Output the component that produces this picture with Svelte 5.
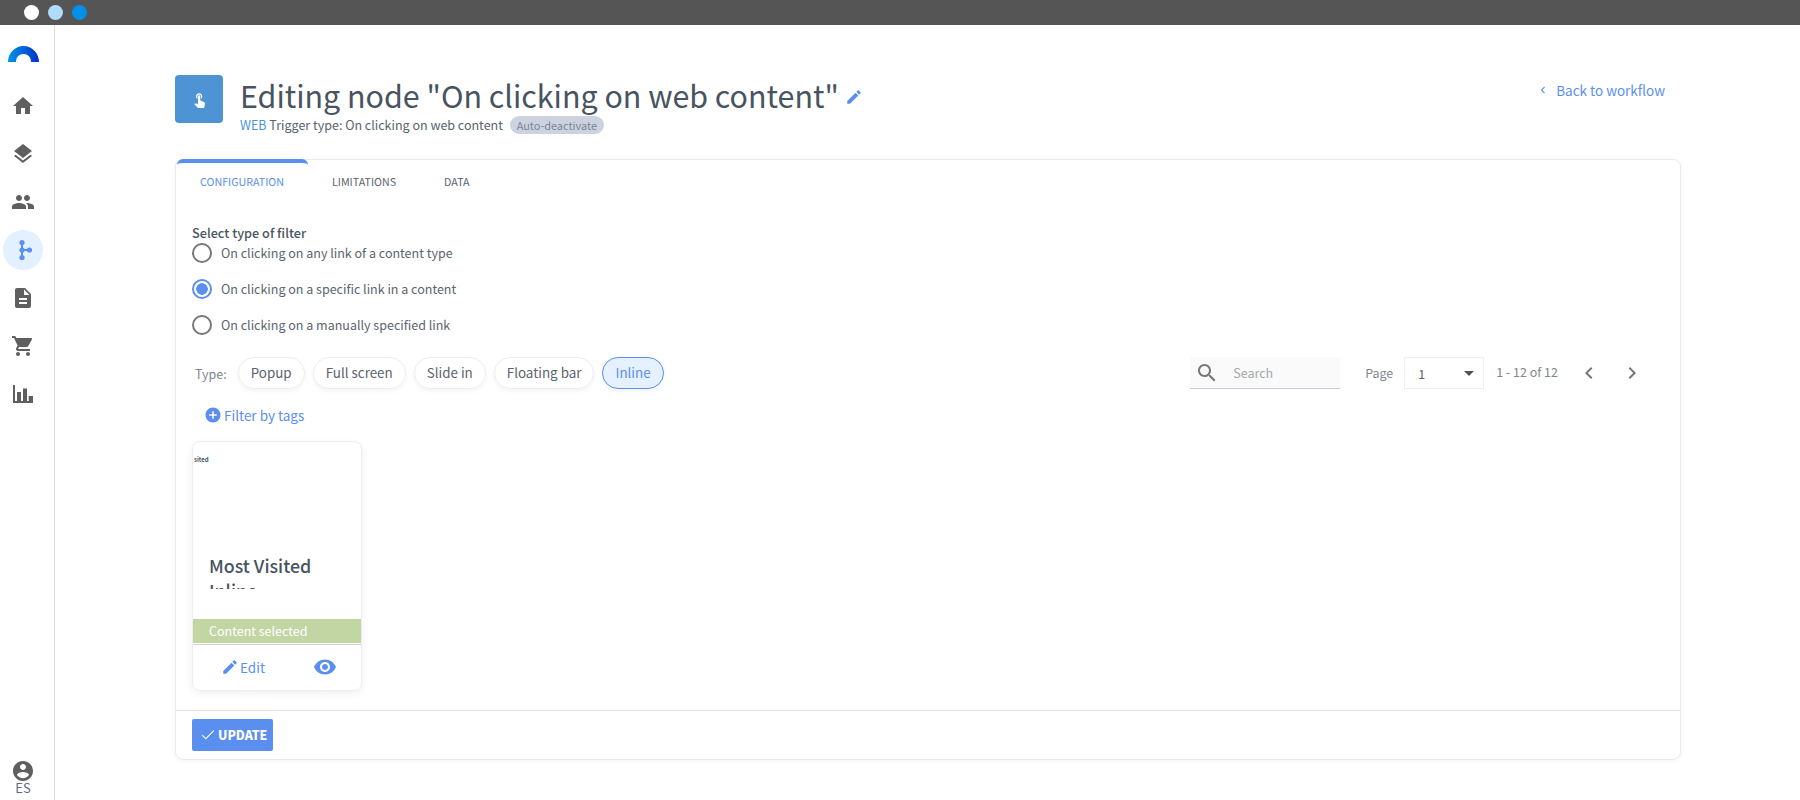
<script>
  const navIcons = [
    { path: "M10 20v-6h4v6h5v-8h3L12 3 2 12h3v8z" },
    { path: "M11.99 18.54l-7.37-5.73L3 14.07l9 7 9-7-1.63-1.27-7.38 5.74zM12 16l7.36-5.73L21 9l-9-7-9 7 1.63 1.27L12 16z" },
    { path: "M16 11c1.66 0 2.99-1.34 2.99-3S17.66 5 16 5c-1.66 0-3 1.34-3 3s1.34 3 3 3zm-8 0c1.66 0 2.99-1.34 2.99-3S9.66 5 8 5C6.34 5 5 6.34 5 8s1.34 3 3 3zm0 2c-2.33 0-7 1.17-7 3.5V19h14v-2.5c0-2.33-4.67-3.5-7-3.5zm8 0c-.29 0-.62.02-.97.05 1.16.84 1.97 1.97 1.97 3.45V19h6v-2.5c0-2.33-4.67-3.5-7-3.5z" },
    { workflow: true },
    { path: "M14 2H6c-1.1 0-1.99.9-1.99 2L4 20c0 1.1.89 2 1.99 2H18c1.1 0 2-.9 2-2V8l-6-6zm2 16H8v-2h8v2zm0-4H8v-2h8v2zm-3-5V3.5L18.5 9H13z" },
    { path: "M7 18c-1.1 0-1.99.9-1.99 2S5.9 22 7 22s2-.9 2-2-.9-2-2-2zM1 2v2h2l3.6 7.59-1.35 2.45c-.16.28-.25.61-.25.96 0 1.1.9 2 2 2h12v-2H7.42c-.14 0-.25-.11-.25-.25l.03-.12.9-1.63h7.45c.75 0 1.41-.41 1.75-1.03l3.58-6.49c.08-.14.12-.31.12-.48 0-.55-.45-1-1-1H5.21l-.94-2H1zm16 16c-1.1 0-1.99.9-1.99 2s.89 2 1.99 2 2-.9 2-2-.9-2-2-2z" },
    { path: "M2 3h2v16h2v-9h4v9h2V6.500h4V19h1.700v-5H22v7H2z" }
  ];
  const editPath = "M3 17.25V21h3.75L17.81 9.94l-3.75-3.75L3 17.25zM20.71 7.04c.39-.39.39-1.02 0-1.41l-2.34-2.34c-.39-.39-1.02-.39-1.41 0l-1.83 1.83 3.75 3.75 1.83-1.83z";
  const tabs = ["CONFIGURATION", "LIMITATIONS", "DATA"];
  const filters = [
    "On clicking on any link of a content type",
    "On clicking on a specific link in a content",
    "On clicking on a manually specified link"
  ];
  const types = ["Popup", "Full screen", "Slide in", "Floating bar", "Inline"];
  let selected = 1;
</script>

<div class="topbar">
  <span class="dot white"></span>
  <span class="dot light"></span>
  <span class="dot blue"></span>
</div>

<div class="shell">
  <nav class="sidebar">
    <svg class="logo" viewBox="0 0 31 16" width="31" height="16">
      <defs>
        <linearGradient id="logoGrad" x1="0" y1="0" x2="1" y2="0">
          <stop offset="0" stop-color="#0095e6" />
          <stop offset="1" stop-color="#0030cc" />
        </linearGradient>
      </defs>
      <path d="M0 16C0 7 7 0 15.500 0S31 7 31 16H23C23 11 20 8 15.500 8S8 11 8 16z" fill="url(#logoGrad)" />
    </svg>
    <div class="nav-list">
      {#each navIcons as icon}
        <div class="nav-item" class:active={icon.workflow}>
          {#if icon.workflow}
            <svg viewBox="0 0 24 24" width="24" height="24">
              <path d="M11 4v16M11 12h8" stroke="#5b8fef" stroke-width="2" fill="none" />
              <circle cx="11" cy="4.500" r="2.600" fill="#5b8fef" />
              <circle cx="11" cy="12" r="2.600" fill="#5b8fef" />
              <circle cx="11" cy="19.500" r="2.600" fill="#5b8fef" />
              <circle cx="18.500" cy="12" r="2.600" fill="#5b8fef" />
            </svg>
          {:else}
            <svg viewBox="0 0 24 24" width="24" height="24"><path d={icon.path} fill="#5f5f5f" /></svg>
          {/if}
        </div>
      {/each}
    </div>
    <div class="account">
      <svg viewBox="0 0 24 24" width="24" height="24"><path d="M12 2C6.480 2 2 6.480 2 12s4.480 10 10 10 10-4.480 10-10S17.520 2 12 2zm0 3c1.660 0 3 1.340 3 3s-1.340 3-3 3-3-1.340-3-3 1.340-3 3-3zm0 14.200c-2.500 0-4.710-1.280-6-3.220.030-1.990 4-3.080 6-3.080 1.990 0 5.970 1.090 6 3.080-1.290 1.940-3.500 3.220-6 3.220z" fill="#5f5f5f" /></svg>
      <span>ES</span>
    </div>
  </nav>

  <main>
    <header>
      <div class="node-icon">
        <svg viewBox="0 0 24 24" width="17" height="17"><path d="M9 11.240V7.500C9 6.120 10.120 5 11.500 5S14 6.120 14 7.500v3.740c1.210-.81 2-2.180 2-3.740C16 5.010 13.990 3 11.500 3S7 5.010 7 7.500c0 1.560.79 2.930 2 3.740zm9.840 4.630l-4.540-2.260c-.17-.07-.35-.11-.54-.11H13v-6c0-.83-.67-1.500-1.500-1.500S10 6.670 10 7.500v10.740l-3.430-.72c-.08-.01-.15-.03-.24-.03-.31 0-.59.130-.79.330l-.79.800 4.940 4.940c.27.270.65.440 1.060.440h6.790c.75 0 1.330-.55 1.440-1.280l.75-5.270c.01-.07.02-.14.02-.2 0-.62-.38-1.160-.91-1.380z" fill="#fff" /></svg>
      </div>
      <div class="titles">
        <div class="title-row">
          <h1>Editing node "On clicking on web content"</h1>
          <svg viewBox="0 0 24 24" width="18" height="18"><path d={editPath} fill="#5b8fef" /></svg>
        </div>
        <div class="subtitle">
          <span class="web">WEB</span> Trigger type: On clicking on web content
          <span class="badge">Auto-deactivate</span>
        </div>
      </div>
      <a class="back" href="#back">
        <svg viewBox="0 0 24 24" width="14" height="14"><path d="M15.400 7.400L14 6l-6 6 6 6 1.400-1.400L10.800 12z" fill="#5b8fef" /></svg>
        Back to workflow
      </a>
    </header>

    <section class="card">
      <div class="tabs">
        {#each tabs as tab, i}
          <div class="tab" class:current={i === 0}>{tab}</div>
        {/each}
      </div>

      <div class="body">
        <div class="field-label">Select type of filter</div>
        <div class="radios">
          {#each filters as label, i}
            <label class="radio">
              <span class="ring" class:on={i === selected}></span>
              {label}
            </label>
          {/each}
        </div>

        <div class="toolbar">
          <span class="type-label">Type:</span>
          {#each types as t}
            <span class="pill" class:on={t === "Inline"}>{t}</span>
          {/each}
          <div class="pager">
            <div class="search">
              <svg viewBox="0 0 24 24" width="24" height="24"><path d="M15.500 14h-.79l-.28-.27C15.410 12.590 16 11.110 16 9.500 16 5.910 13.090 3 9.500 3S3 5.910 3 9.500 5.910 16 9.500 16c1.610 0 3.090-.59 4.230-1.570l.27.280v.79l5 4.990L20.490 19l-4.990-5zm-6 0C7.010 14 5 11.990 5 9.500S7.010 5 9.500 5 14 7.010 14 9.500 11.990 14 9.500 14z" fill="#777" /></svg>
              <span>Search</span>
            </div>
            <span class="page-label">Page</span>
            <div class="select"><span>1</span><i class="caret"></i></div>
            <span class="range">1 - 12 of 12</span>
            <svg class="prev" viewBox="0 0 24 24" width="24" height="24"><path d="M15.400 7.400L14 6l-6 6 6 6 1.400-1.400L10.800 12z" fill="#777" /></svg>
            <svg class="next" viewBox="0 0 24 24" width="24" height="24"><path d="M8.600 16.600L10 18l6-6-6-6-1.400 1.400L13.200 12z" fill="#777" /></svg>
          </div>
        </div>

        <a class="tags" href="#tags">
          <svg viewBox="0 0 24 24" width="18" height="18"><path d="M12 2C6.480 2 2 6.480 2 12s4.480 10 10 10 10-4.480 10-10S17.520 2 12 2zm5 11h-4v4h-2v-4H7v-2h4V7h2v4h4v2z" fill="#5b8fef" /></svg>
          Filter by tags
        </a>

        <article class="content">
          <div class="thumb"><span>sited</span></div>
          <div class="content-title">Most Visited Inline</div>
          <div class="selected-band">Content selected</div>
          <div class="actions">
            <span class="edit">
              <svg viewBox="0 0 24 24" width="18" height="18"><path d={editPath} fill="#5b8fef" /></svg>
              Edit
            </span>
            <svg viewBox="0 0 24 24" width="24" height="24"><path d="M12 4.500C7 4.500 2.730 7.610 1 12c1.730 4.390 6 7.500 11 7.500s9.270-3.110 11-7.500c-1.730-4.390-6-7.500-11-7.500zM12 17c-2.760 0-5-2.240-5-5s2.240-5 5-5 5 2.240 5 5-2.240 5-5 5zm0-8c-1.660 0-3 1.340-3 3s1.340 3 3 3 3-1.340 3-3-1.340-3-3-3z" fill="#5b8fef" /></svg>
          </div>
        </article>
      </div>

      <footer>
        <button>
          <svg viewBox="0 0 24 24" width="18" height="18"><path d="M9 16.170L4.830 12l-.7.700L9 17.600 20 6.600l-.7-.7z" fill="#fff" stroke="#fff" stroke-width=".6" /></svg>
          UPDATE
        </button>
      </footer>
    </section>
  </main>
</div>

<style>
  :global(body) {
    background: #fff;
    font-family: "Noto Sans CJK SC", "Noto Sans", sans-serif;
    color: #4a5560;
    overflow: hidden;
  }

  .topbar {
    height: 25px;
    background: #555;
    display: flex;
    align-items: center;
    gap: 9px;
    padding-left: 24px;
  }

  .dot {
    width: 15px;
    height: 15px;
    border-radius: 50%;
  }
  .white { background: #fff; }
  .light { background: #aedcfa; }
  .blue { background: #0090e8; }

  .shell {
    display: flex;
    height: 775px;
  }

  .sidebar {
    box-sizing: border-box;
    width: 55px;
    padding-right: 8px;
    border-right: 1px solid #dcdcdc;
    display: flex;
    flex-direction: column;
    align-items: center;
    flex-shrink: 0;
  }

  .logo {
    margin-top: 21px;
  }

  .nav-list {
    margin-top: 20px;
    display: flex;
    flex-direction: column;
  }

  .nav-item {
    width: 40px;
    height: 48px;
    display: flex;
    align-items: center;
    justify-content: center;
    position: relative;
    z-index: 0;
  }

  .nav-item.active::before {
    content: "";
    position: absolute;
    left: 0;
    top: 4px;
    width: 40px;
    height: 40px;
    border-radius: 50%;
    background: #e3f0ff;
    z-index: -1;
  }

  .account {
    margin-top: auto;
    display: flex;
    flex-direction: column;
    align-items: center;
    padding-bottom: 5px;
    font-size: 13px;
    line-height: 15px;
    color: #5f6b76;
  }

  .account span {
    margin-top: -3px;
  }

  main {
    width: 1506px;
    margin-left: 120px;
  }

  header {
    display: flex;
    align-items: flex-start;
    padding-top: 50px;
    height: 84px;
  }

  .node-icon {
    width: 48px;
    height: 48px;
    border-radius: 4px;
    background: #4e94d4;
    display: flex;
    align-items: center;
    justify-content: center;
    flex-shrink: 0;
    margin-right: 17px;
  }

  .titles {
    flex: 1;
  }

  .title-row {
    display: flex;
    align-items: center;
    gap: 6px;
    height: 46px;
    margin-top: -3px;
  }

  h1 {
    margin: 0;
    font-size: 30.400px;
    font-weight: 400;
    line-height: 46px;
    color: #47535f;
  }

  .title-row svg {
    margin-top: 4px;
  }

  .subtitle {
    font-size: 12.500px;
    line-height: 18px;
    margin-top: -2px;
    color: #59636e;
  }

  .web {
    color: #4e94d4;
  }

  .badge {
    display: inline-block;
    margin-left: 4px;
    padding: 0 7px;
    height: 18px;
    line-height: 18px;
    border-radius: 9px;
    background: #cdd3de;
    color: #77839a;
    font-size: 10.900px;
  }

  .back {
    display: flex;
    align-items: center;
    gap: 6px;
    margin: 6px 16px 0 0;
    color: #5b8fef;
    font-size: 13.500px;
    line-height: 18px;
    text-decoration: none;
  }

  .card {
    height: 601px;
    box-sizing: border-box;
    border: 1px solid #ebebeb;
    border-radius: 8px;
    box-shadow: 0 1px 5px rgba(0, 0, 0, 0.05);
    display: flex;
    flex-direction: column;
  }

  .tabs {
    display: flex;
    height: 44px;
    margin-top: -1px;
    padding-left: 1px;
  }

  .tab {
    font-size: 10.700px;
    line-height: 46px;
    color: #59636e;
    padding: 0 24px;
    min-width: 0;
  }

  .tab.current {
    color: #5b8fef;
    border-top: 4px solid #5b8fef;
    border-radius: 6px 6px 0 0;
    line-height: 38px;
    height: 40px;
    padding: 0 24px 0 23px;
    width: 84px;
  }

  .body {
    flex: 1;
    padding: 21px 15px 0 16px;
  }

  .field-label {
    font-size: 12.700px;
    font-weight: 500;
    line-height: 18px;
    color: #4a5560;
  }

  .radios {
    display: flex;
    flex-direction: column;
    gap: 16px;
    margin-top: 1px;
  }

  .radio {
    display: flex;
    align-items: center;
    gap: 9px;
    font-size: 12.500px;
    line-height: 20px;
    color: #5a646e;
  }

  .ring {
    box-sizing: border-box;
    width: 20px;
    height: 20px;
    border: 2px solid #777;
    border-radius: 50%;
    flex-shrink: 0;
  }

  .ring.on {
    border-color: #5b8fef;
    background: radial-gradient(circle, #5b8fef 0 5.500px, #fff 6px);
  }

  .toolbar {
    display: flex;
    align-items: center;
    gap: 8px;
    margin-top: 22px;
    height: 32px;
  }

  .type-label {
    margin-left: 3px;
    margin-right: 3px;
    font-size: 12.500px;
    color: #80878e;
  }

  .pill {
    box-sizing: border-box;
    height: 32px;
    line-height: 29px;
    padding: 0 12px;
    border: 1px solid #eee;
    border-radius: 16px;
    font-size: 13.400px;
    color: #5a646e;
    box-shadow: 0 2px 5px rgba(0, 0, 0, 0.05);
  }

  .pill.on {
    background: #e6f1ff;
    border-color: #5b8fef;
    color: #5b8fef;
  }

  .pager {
    margin-left: auto;
    display: flex;
    align-items: center;
    margin-right: 21px;
  }

  .search {
    box-sizing: border-box;
    width: 150px;
    height: 32px;
    background: #fafafa;
    border-bottom: 1px solid #c5cddb;
    display: flex;
    align-items: center;
    font-size: 12.500px;
    color: #a3a8ad;
    padding-left: 5px;
  }

  .search span {
    margin-left: 14px;
  }

  .page-label {
    margin-left: 25px;
    font-size: 12.400px;
    color: #80878e;
  }

  .select {
    box-sizing: border-box;
    width: 80px;
    height: 32px;
    margin-left: 11px;
    border: 1px solid #eee;
    display: flex;
    align-items: center;
    justify-content: space-between;
    padding: 0 9px 0 13px;
    font-size: 12.500px;
    color: #59636e;
  }

  .caret {
    width: 0;
    height: 0;
    border-left: 5px solid transparent;
    border-right: 5px solid transparent;
    border-top: 5px solid #4a5560;
  }

  .range {
    margin-left: 12px;
    font-size: 12.500px;
    color: #80878e;
    margin-top: -3px;
  }

  .prev {
    margin-left: 19px;
  }

  .next {
    margin-left: 19px;
  }

  .tags {
    display: flex;
    align-items: center;
    gap: 2px;
    margin: 17px 0 0 12px;
    font-size: 13.500px;
    line-height: 18px;
    color: #5b8fef;
    text-decoration: none;
  }

  .content {
    box-sizing: border-box;
    width: 170px;
    height: 250px;
    margin-top: 17px;
    border: 1px solid #ededed;
    border-radius: 8px;
    box-shadow: 0 3px 8px rgba(0, 0, 0, 0.06);
    display: flex;
    flex-direction: column;
    overflow: hidden;
  }

  .thumb {
    height: 103px;
    font-size: 6px;
    font-weight: 700;
    padding: 13px 0 0 1px;
    box-sizing: border-box;
    line-height: 10px;
    color: #47535f;
  }

  .content-title {
    margin: 8px 10px 0 16px;
    height: 36px;
    overflow: hidden;
    font-size: 17.800px;
    font-weight: 500;
    line-height: 25px;
    color: #47535f;
  }

  .selected-band {
    margin-top: 30px;
    height: 25px;
    box-sizing: border-box;
    background: #c2d6a4;
    color: #fff;
    font-size: 12.500px;
    line-height: 24px;
    padding-left: 16px;
    border-bottom: 1px solid #fff;
    box-shadow: 0 1px 0 #cfcfcf;
  }

  .actions {
    flex: 1;
    display: flex;
    align-items: center;
    padding: 0 24px 0 28px;
    justify-content: space-between;
  }

  .edit {
    display: flex;
    align-items: center;
    gap: 1px;
    font-size: 13.500px;
    color: #5b8fef;
  }

  footer {
    height: 49px;
    box-sizing: border-box;
    border-top: 1px solid #e4e4e4;
    padding: 8px 0 0 16px;
  }

  button {
    box-sizing: border-box;
    width: 81px;
    height: 32px;
    display: flex;
    align-items: center;
    gap: 1px;
    padding: 0 0 0 7px;
    border: none;
    border-radius: 2px;
    background: #5b8fef;
    color: #fff;
    font-family: inherit;
    font-size: 12.300px;
    font-weight: 900;
  }
</style>
